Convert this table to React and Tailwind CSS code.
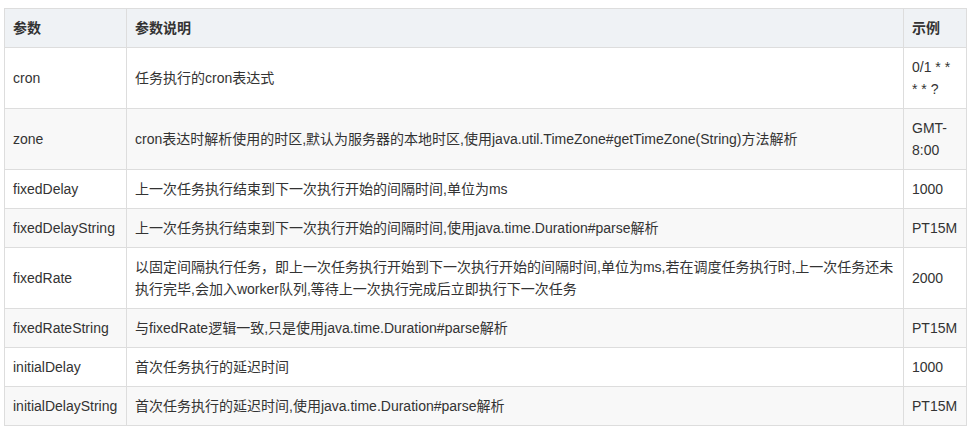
import React from 'react'

const rows = [
  ['cron', '任务执行的cron表达式', '0/1 * * * * ?'],
  ['zone', 'cron表达时解析使用的时区,默认为服务器的本地时区,使用java.util.TimeZone#getTimeZone(String)方法解析', 'GMT-8:00'],
  ['fixedDelay', '上一次任务执行结束到下一次执行开始的间隔时间,单位为ms', '1000'],
  ['fixedDelayString', '上一次任务执行结束到下一次执行开始的间隔时间,使用java.time.Duration#parse解析', 'PT15M'],
  ['fixedRate', '以固定间隔执行任务，即上一次任务执行开始到下一次执行开始的间隔时间,单位为ms,若在调度任务执行时,上一次任务还未执行完毕,会加入worker队列,等待上一次执行完成后立即执行下一次任务', '2000'],
  ['fixedRateString', '与fixedRate逻辑一致,只是使用java.time.Duration#parse解析', 'PT15M'],
  ['initialDelay', '首次任务执行的延迟时间', '1000'],
  ['initialDelayString', '首次任务执行的延迟时间,使用java.time.Duration#parse解析', 'PT15M'],
]

const App = () => {
  return (
    <div
      className="w-[974px] h-[438px] bg-white pt-2 pl-1 text-[14px] leading-[22px] text-[#333]"
      style={{ fontFamily: '"Liberation Sans", "Noto Sans CJK SC", sans-serif' }}
    >
      <table className="table-fixed border-collapse w-[962px]">
        <colgroup>
          <col className="w-[122px]" />
          <col className="w-[777px]" />
          <col className="w-[63px]" />
        </colgroup>
        <thead>
          <tr className="bg-[#eff2f5]">
            <th className="border border-[#ddd] px-2 py-2 text-left font-bold">参数</th>
            <th className="border border-[#ddd] px-2 py-2 text-left font-bold">参数说明</th>
            <th className="border border-[#ddd] px-2 py-2 text-left font-bold">示例</th>
          </tr>
        </thead>
        <tbody>
          {rows.map((r, i) => (
            <tr key={r[0]} className={i % 2 === 1 ? 'bg-[#f8f8f8]' : 'bg-white'}>
              <td className="border border-[#ddd] px-2 py-2 align-middle">{r[0]}</td>
              <td className="border border-[#ddd] px-2 py-2 align-middle">{r[1]}</td>
              <td className="border border-[#ddd] px-2 py-2 align-middle">{r[2]}</td>
            </tr>
          ))}
        </tbody>
      </table>
    </div>
  )
}

export default App
